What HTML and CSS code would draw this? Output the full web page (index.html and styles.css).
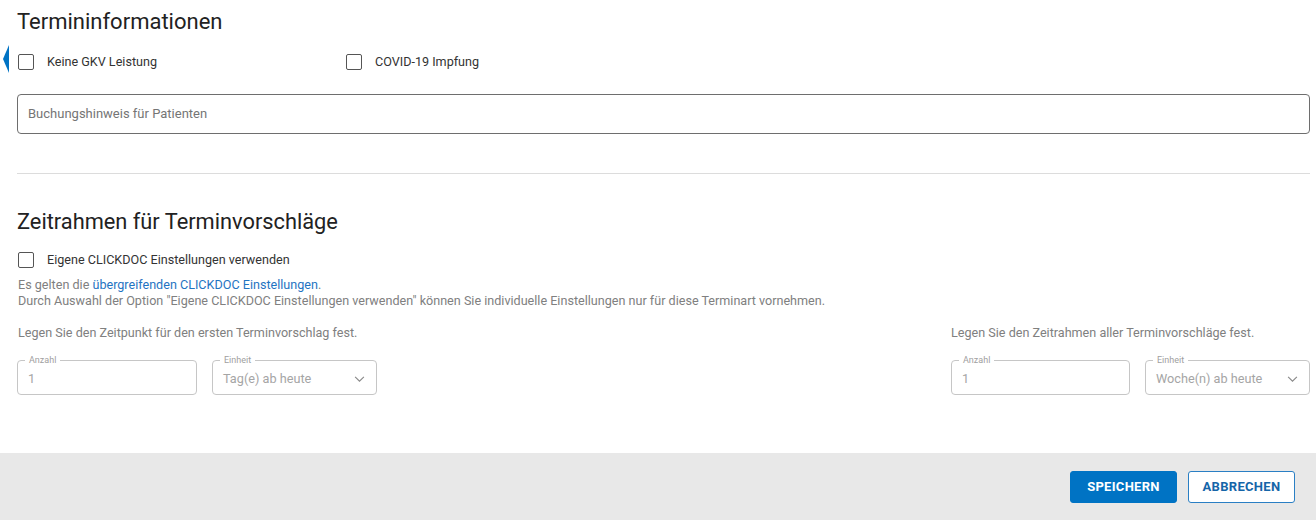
FILE: index.html
```html
<!DOCTYPE html>
<html lang="de">
<head>
    <meta charset="UTF-8">
    <title>Termininformationen</title>
    <link rel="stylesheet" href="styles.css">
</head>
<body>

<div class="page">
    <div class="content">
        <span class="side-tab"></span>
        <h2 class="section-title">Termininformationen</h2>
        <div class="check-row">
            <label class="check check-wide"><span class="box"></span>Keine GKV Leistung</label>
            <label class="check"><span class="box"></span>COVID-19 Impfung</label>
        </div>
        <div class="text-input">Buchungshinweis für Patienten</div>

        <hr class="divider">

        <h2 class="section-title second">Zeitrahmen für Terminvorschläge</h2>
        <div class="check-row single">
            <label class="check"><span class="box"></span>Eigene CLICKDOC Einstellungen verwenden</label>
        </div>
        <p class="hint">Es gelten die <a href="#">übergreifenden CLICKDOC Einstellungen</a>.<br>
            Durch Auswahl der Option "Eigene CLICKDOC Einstellungen verwenden" können Sie individuelle Einstellungen nur für diese Terminart vornehmen.</p>

        <div class="ranges">
            <div class="range">
                <p class="range-label">Legen Sie den Zeitpunkt für den ersten Terminvorschlag fest.</p>
                <div class="fields">
                    <div class="field field-num"><span class="legend">Anzahl</span>1</div>
                    <div class="field field-select"><span class="legend">Einheit</span>Tag(e) ab heute
                        <svg class="chevron" viewBox="0 0 12 8" width="11" height="7"><path d="M1 1l5 5 5-5" fill="none" stroke="#8a8a8a" stroke-width="1.3"/></svg>
                    </div>
                </div>
            </div>
            <div class="range range-right">
                <p class="range-label">Legen Sie den Zeitrahmen aller Terminvorschläge fest.</p>
                <div class="fields">
                    <div class="field field-num"><span class="legend">Anzahl</span>1</div>
                    <div class="field field-select"><span class="legend">Einheit</span>Woche(n) ab heute
                        <svg class="chevron" viewBox="0 0 12 8" width="11" height="7"><path d="M1 1l5 5 5-5" fill="none" stroke="#8a8a8a" stroke-width="1.3"/></svg>
                    </div>
                </div>
            </div>
        </div>
    </div>

    <div class="footer">
        <button class="btn btn-primary">SPEICHERN</button>
        <button class="btn btn-outline">ABBRECHEN</button>
    </div>
</div>

</body>
</html>
```

FILE: styles.css
```css
body {
    margin: 0;
    font-family: Roboto, "Liberation Sans", sans-serif;
    background: #fff;
    color: #333;
}
.page {
    width: 1316px;
    height: 520px;
    display: flex;
    flex-direction: column;
}
.content {
    position: relative;
    flex: 1;
    padding: 0 6px 0 17px;
}
.side-tab {
    position: absolute;
    left: 3px;
    top: 45px;
    width: 0;
    height: 0;
    border-top: 14px solid transparent;
    border-bottom: 14px solid transparent;
    border-right: 6px solid #0073c4;
}
.section-title {
    margin: 0;
    padding-top: 8px;
    font-size: 22px;
    font-weight: 400;
    line-height: 28px;
    color: #222;
}
.section-title.second {
    padding-top: 0;
    margin-top: 34px;
    font-size: 21.8px;
}
.check-row {
    display: flex;
    margin-top: 17px;
    height: 17px;
    align-items: center;
}
.check-row.single {
    margin-top: 15px;
}
.check {
    display: flex;
    align-items: center;
    font-size: 12.6px;
    color: #333;
}
.check-wide {
    width: 328px;
}
.box {
    width: 14px;
    height: 14px;
    border: 1px solid #555;
    border-radius: 2px;
    margin: 0 13px 0 1px;
}
.text-input {
    margin-top: 24px;
    height: 36px;
    border: 1px solid #6e6e6e;
    border-radius: 4px;
    padding: 0 0 2px 10px;
    display: flex;
    align-items: center;
    font-size: 13px;
    color: #757575;
}
.divider {
    margin: 39px 0 0;
    border: 0;
    border-top: 1px solid #dcdcdc;
}
.hint {
    margin: 9px 0 0 1px;
    font-size: 12.6px;
    line-height: 16px;
    color: #808080;
}
.hint a {
    color: #1f74c2;
    text-decoration: none;
}
.ranges {
    display: flex;
    justify-content: space-between;
    margin-top: 16px;
}
.range-label {
    margin: 0 0 0 1px;
    font-size: 12.6px;
    line-height: 16px;
    color: #808080;
}
.fields {
    display: flex;
    gap: 15px;
    margin-top: 19px;
}
.range-right .fields {
    margin-left: 1px;
}
.range-right .field-num {
    width: 179px;
}
.field {
    position: relative;
    height: 35px;
    border: 1px solid #c6c6c6;
    border-radius: 4px;
    box-sizing: border-box;
    display: flex;
    align-items: center;
    padding: 1px 10px 0;
    font-size: 12.7px;
    color: #a5a5a5;
}
.field-num {
    width: 180px;
}
.field-select {
    width: 165px;
}
.legend {
    position: absolute;
    left: 7px;
    top: -6px;
    padding: 0 4px;
    background: #fff;
    font-size: 9px;
    line-height: 10px;
    color: #a0a0a0;
}
.chevron {
    position: absolute;
    right: 11px;
    top: 15px;
}
.footer {
    height: 67px;
    background: #e8e8e8;
    display: flex;
    justify-content: flex-end;
    align-items: center;
    gap: 11px;
    padding-right: 21px;
}
.btn {
    height: 32px;
    width: 107px;
    border-radius: 3px;
    font-family: Roboto, "Liberation Sans", sans-serif;
    font-size: 13px;
    font-weight: 700;
    letter-spacing: 0.3px;
    cursor: pointer;
}
.btn-primary {
    background: #0073c4;
    border: 1px solid #0073c4;
    color: #fff;
}
.btn-outline {
    background: #fff;
    border: 1px solid #2a7fc4;
    color: #1565a8;
}
```
